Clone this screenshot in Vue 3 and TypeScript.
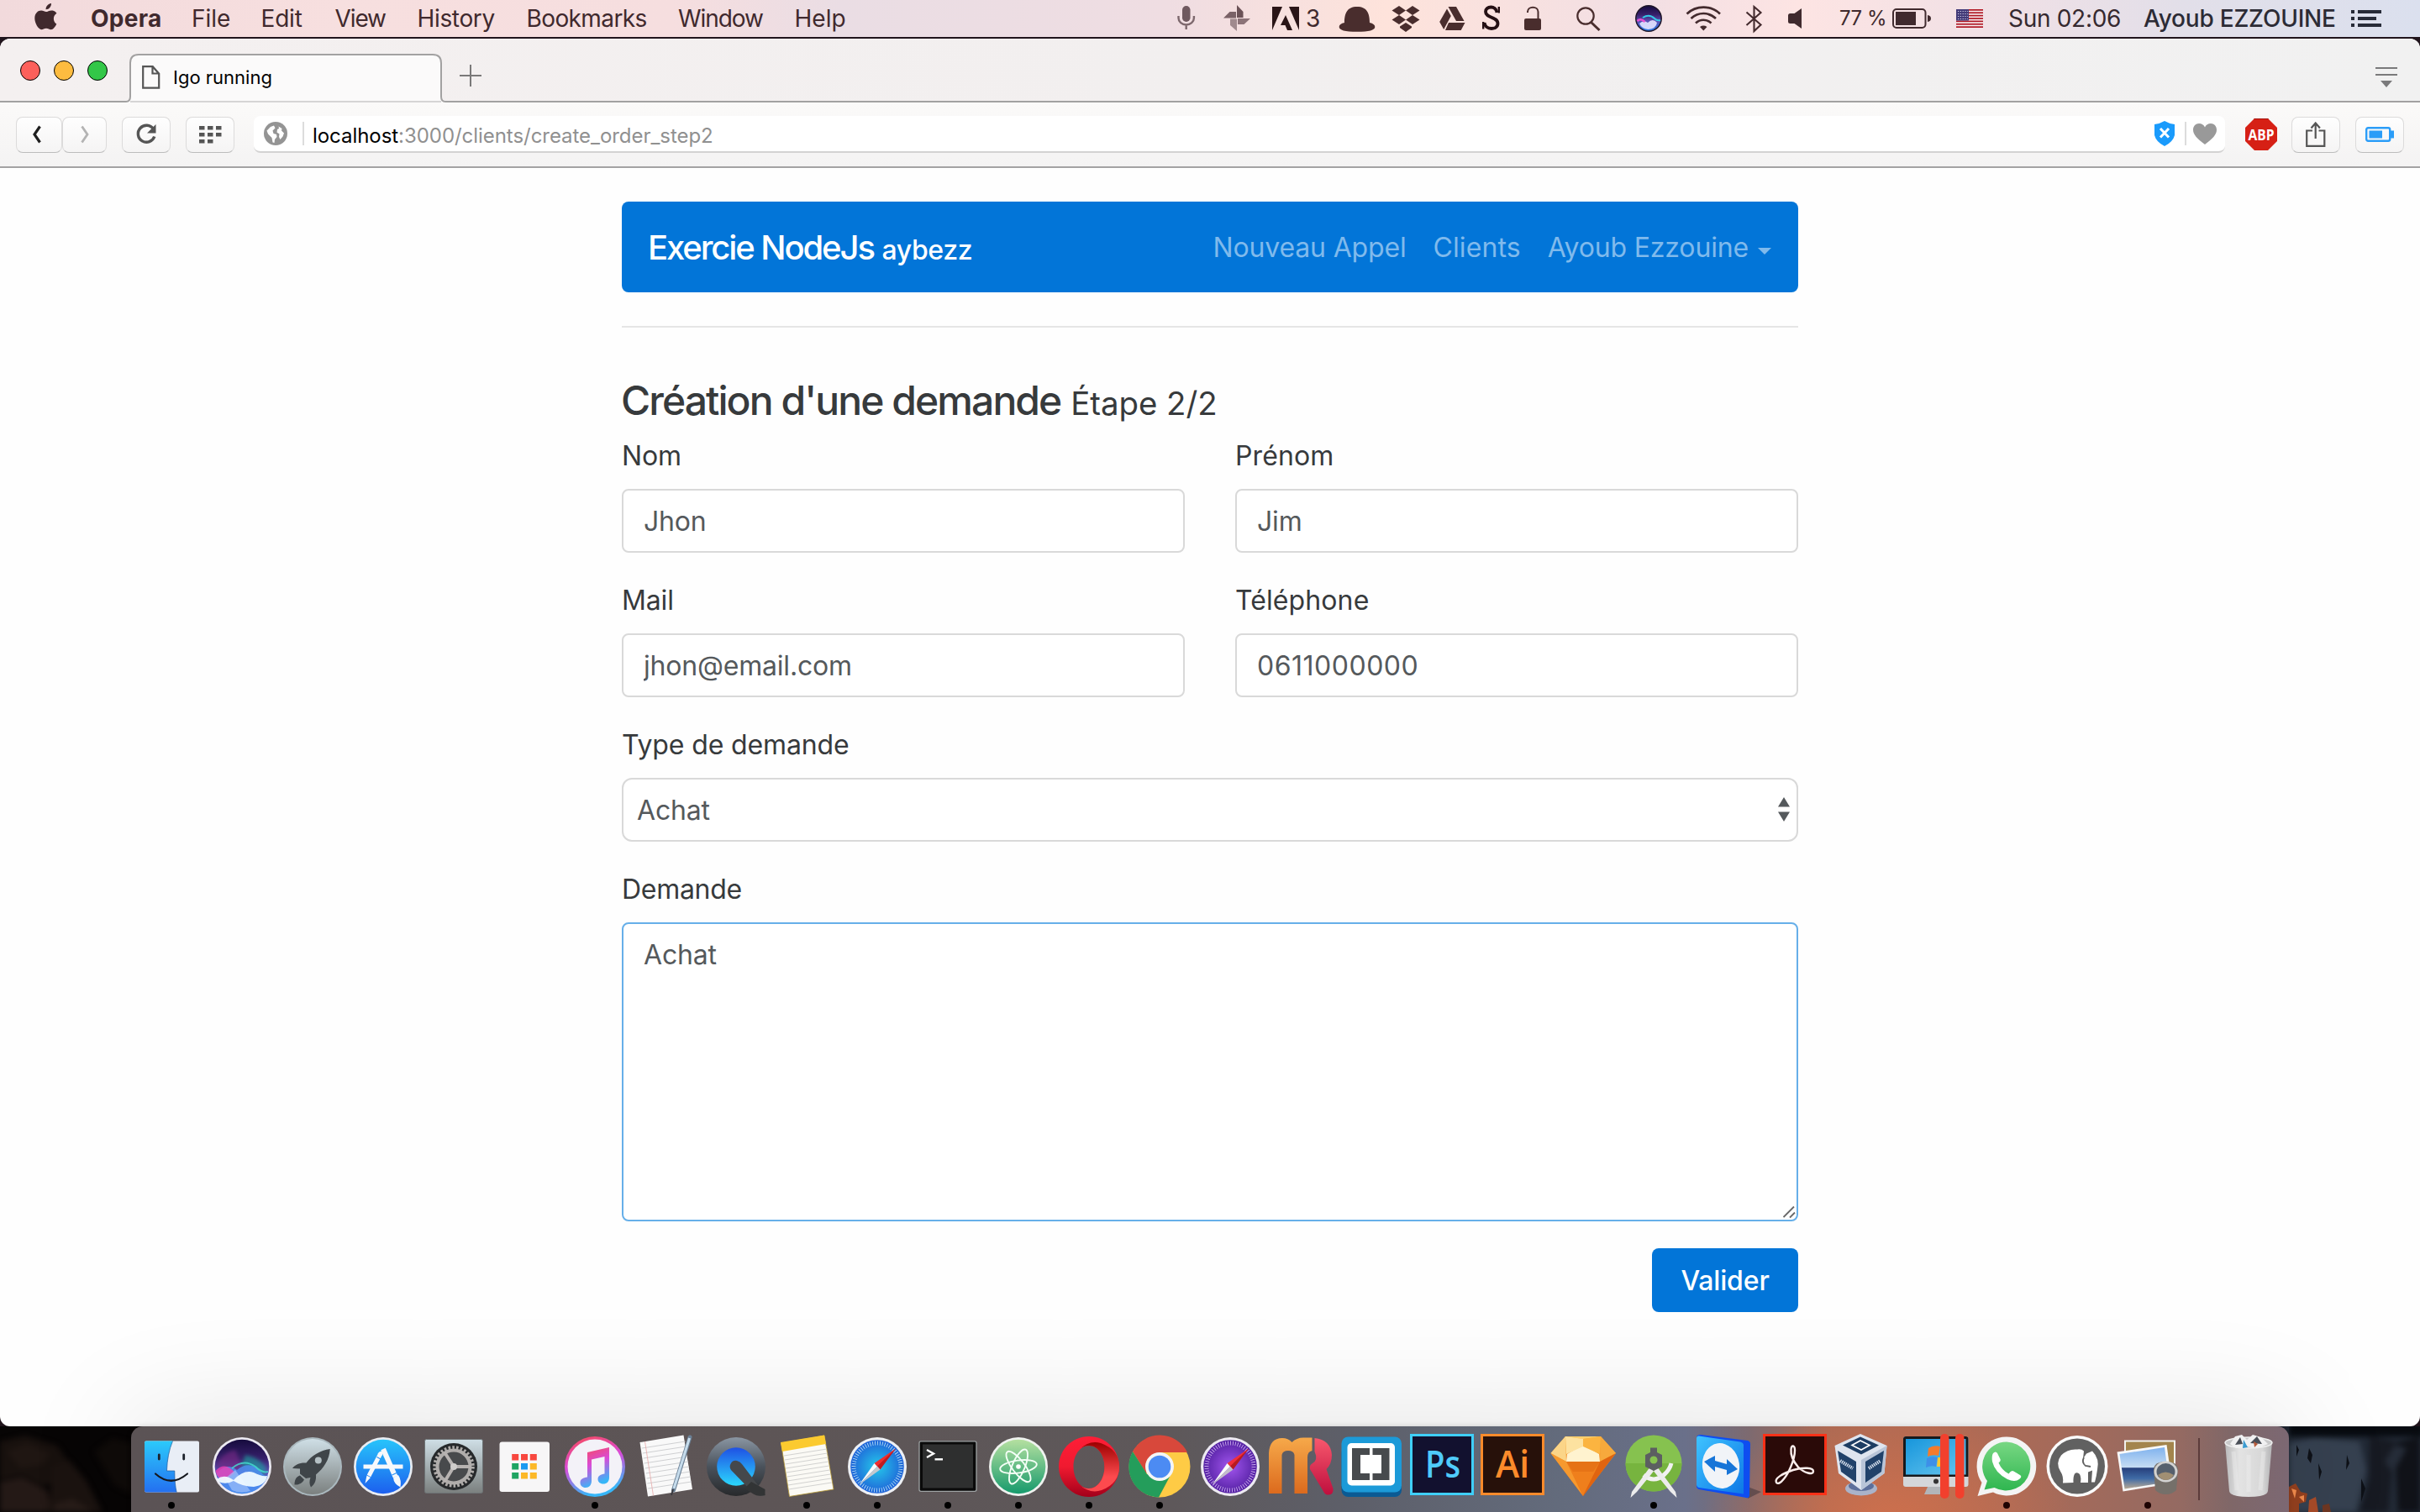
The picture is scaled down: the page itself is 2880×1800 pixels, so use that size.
<script setup lang="ts">
import { ref } from 'vue'

interface MenuItem {
  label: string
  width: number
  spacing: number
}

// Application menus with their title widths and tracking
const menus: MenuItem[] = [
  { label: 'File', width: 82.5, spacing: 0 },
  { label: 'Edit', width: 88, spacing: -0.2 },
  { label: 'View', width: 98, spacing: -1.1 },
  { label: 'History', width: 130, spacing: -0.34 },
  { label: 'Bookmarks', width: 180.5, spacing: -0.6 },
  { label: 'Window', width: 138.5, spacing: -1.05 },
  { label: 'Help', width: 64, spacing: 0 },
]

const form = ref({
  nom: 'Jhon',
  prenom: 'Jim',
  mail: 'jhon@email.com',
  telephone: '0611000000',
  type: 'Achat',
  demande: 'Achat',
})

// 3 × 3 launcher tiles
const tiles = ['#f8473f', '#f8473f', '#f8473f', '#1fa463', '#1a9af0', '#fcb827', '#1fa463', '#fcb827', '#fcb827']
const rulings = [0, 1, 2, 3, 4, 5, 6, 7, 8]
const flagStripes = [0, 1, 2, 3, 4, 5, 6]
</script>

<template>
  <div class="desktop">
    <header class="menubar">
      <svg class="seg" width="108" height="44" viewBox="0 0 108 44">
        <path fill="#40292d" d="M61 4c.4 3.400-2.800 7.400-6.400 7.300C54.200 8 57.500 4.300 61 4zM67.300 28.500c-1.500 3.400-4 6.700-6.600 6.700-2.200 0-3-1.400-5.700-1.400s-3.600 1.400-5.700 1.400C45.800 35.200 41.300 27.600 41.300 21.800c0-6 3.900-9.300 7.700-9.300 2.400 0 4.400 1.600 5.900 1.600 1.400 0 3.700-1.700 6.500-1.700 1.100 0 4.300.4 6.100 3.400-5.200 3.200-4.300 10.600-.2 12.700z" />
      </svg>
      <b class="app-name">Opera</b>
      <span v-for="m in menus" :key="m.label" class="menu" :style="{ width: m.width + 'px', letterSpacing: m.spacing + 'px' }">{{ m.label }}</span>
      <div class="status">
        <svg class="seg" width="56" height="44" viewBox="1390 0 56 44">
          <rect x="1407" y="7" width="9.500" height="19" rx="4.700" fill="#6f595f" />
          <path d="M1402.500 19v2.500a9.200 8 0 0 0 18.400 0V19M1411.700 29.500V35" fill="none" stroke="#7d686d" stroke-width="2.400" />
        </svg>
        <svg class="seg" width="54" height="44" viewBox="1446 0 54 44">
          <path fill="#6b5257" d="M1472 6l7.500 8v7h-7.500z" /><path fill="#8b7378" d="M1473 22h15l-7.500 7h-7.500z" />
          <path fill="#a08a8e" d="M1472 22.500V37l-8-7v-7.500z" /><path fill="#7a6267" d="M1471 21.500h-15l7.500-7.500h7.500z" />
        </svg>
        <svg class="seg" width="52" height="44" viewBox="1500 0 52 44">
          <path fill="#2a1517" d="M1514 8h12l-12 28zM1534 8h12v28zM1530 18l8 18h-6l-2.500-6h-5.500z" />
        </svg>
        <span class="count">3</span>
        <svg class="seg" width="62" height="44" viewBox="1584 0 62 44">
          <path fill="#492d2d" d="M1600 27c0-11 3-19 15-19s15 8 15 19c4 1 6.300 2.500 6.300 5 0 4-7 5.800-21.300 5.800s-21.300-1.800-21.300-5.800c0-2.500 2.300-4 6.300-5z" />
        </svg>
        <svg class="seg" width="56" height="44" viewBox="1646 0 56 44">
          <path fill="#492d2d" d="M1665 7l8 5.500-8 5.500-8.500-5.500zM1681 7l8.500 5.500-8.500 5.500-8-5.500zM1656.500 23.500l8.500-5.500 8 5.500-8 5.500zM1689.500 23.500L1681 18l-8 5.500 8 5.500zM1673 27l-7 4.500v1.500l7 5 7-5v-1.500z" />
        </svg>
        <svg class="seg" width="52" height="44" viewBox="1702 0 52 44">
          <path fill="#492d2d" d="M1723.500 8h9.500l9.500 17h-9.500zM1722 10.500l4.800 8.500-8.600 16-5-9zM1724 27h19.500l-4.800 9H1720z" />
        </svg>
        <svg class="seg" width="46" height="44" viewBox="1754 0 46 44">
          <path d="M1781.500 15c-.5-4-3.500-6.500-7-6.500-4 0-6.500 2.300-6.500 5.500 0 8 14.500 5.500 14.500 14 0 4-3.500 6-7.500 6-4.500 0-8-3-8.500-7" fill="none" stroke="#241014" stroke-width="3.800" />
          <path d="M1783.800 8v7.500M1765.200 26v8.500" stroke="#241014" stroke-width="2.400" />
        </svg>
        <svg class="seg" width="56" height="44" viewBox="1800 0 56 44">
          <rect x="1814" y="22" width="20" height="14" rx="2" fill="#492d2d" />
          <path d="M1818 15v-1c0-7 12.500-7 12.500 0v8" fill="none" stroke="#492d2d" stroke-width="2" />
        </svg>
        <svg class="seg" width="70" height="44" viewBox="1856 0 70 44">
          <circle cx="1887" cy="19" r="9.700" fill="none" stroke="#492d2d" stroke-width="2.200" />
          <path d="M1893.500 26.500l10 9.500" stroke="#492d2d" stroke-width="3" />
        </svg>
        <svg class="seg" width="64" height="44" viewBox="1926 0 64 44">
          <circle cx="1962" cy="22" r="15.200" fill="url(#siri)" stroke="#1d1527" stroke-width="1.500" />
          <path d="M1951 28q5-5 10-1 6-6 11 0-1 7-10.500 8-8-1-10.500-7z" fill="#e6e4ff" opacity=".9" />
          <path d="M1955 21q8-5 14 1 3 3 7 2" fill="none" stroke="#35c9e6" stroke-width="2" />
          <path d="M1948.500 25q4-4 9 1" stroke="#e94fd0" stroke-width="2.500" fill="none" />
        </svg>
        <svg class="seg" width="70" height="44" viewBox="1990 0 70 44">
          <g fill="none" stroke="#432a2d" stroke-width="2.700"><path d="M2007.500 16.500c11-10.500 28.500-10.500 39.500 0M2012.500 22c8.500-8 21-8 29.500 0M2018 27.500c5.500-5 13-5 18.500 0" /></g>
          <path fill="#432a2d" d="M2023 32q4.200-2.800 8.500 0l-4.200 4.500z" />
        </svg>
        <svg class="seg" width="52" height="44" viewBox="2060 0 52 44">
          <path d="M2078.500 14.500l17 15-8 7.500V8l8 7-17 15" fill="none" stroke="#432a2d" stroke-width="2.100" />
        </svg>
        <svg class="seg" width="48" height="44" viewBox="2112 0 48 44">
          <path fill="#402a2e" d="M2130.500 16h5l8.500-6v24l-8.500-6h-5q-2.500 0-2.500-2.500v-7q0-2.500 2.500-2.500z" />
        </svg>
        <span class="charge">77 %</span>
        <svg class="seg" width="64" height="44" viewBox="2246 0 64 44">
          <rect x="2253" y="11" width="38.500" height="22" rx="4" fill="none" stroke="#402a2e" stroke-width="2" />
          <rect x="2256" y="14" width="24" height="16" fill="#402a2e" /><path fill="#402a2e" d="M2294 18q4 .5 4 4t-4 4z" />
        </svg>
        <svg class="seg" width="66" height="44" viewBox="2310 0 66 44">
          <rect x="2328" y="11" width="32" height="22" fill="#f5edf0" />
          <rect v-for="s in flagStripes" :key="s" x="2328" :y="11 + s * 3.380" width="32" height="1.700" fill="#b01622" />
          <rect x="2328" y="11" width="15" height="13.500" fill="#423a78" />
          <path d="M2330 13.500h12M2330 16.500h12M2330 19.500h12M2330 22.500h12" stroke="#cfcce4" stroke-width="1.200" stroke-dasharray="1.200 1.600" />
        </svg>
        <span class="clock">Sun 02:06</span>
        <span class="user">Ayoub EZZOUINE</span>
        <svg class="seg" width="90" height="44" viewBox="2790 0 90 44">
          <path fill="#272b38" d="M2798 12h4v4h-4zM2798 20h4v4h-4zM2798 28h4v4h-4zM2806 12h28v4h-28zM2806 20h22v4h-22zM2806 28h28v4h-28z" />
        </svg>
      </div>
    </header>

    <main class="window">
      <div class="titlebar">
        <div class="lights"><i class="red" /><i class="yellow" /><i class="green" /></div>
        <div class="tab">
          <svg class="tab-shape" width="380" height="58" viewBox="0 0 380 58">
            <path d="M0 57q5 0 5-6V11q0-10 10-10h350q10 0 10 10v40q0 6 5 6v1H0z" fill="#fbfafa" />
            <path d="M5 57h370" stroke="#d6d5d5" stroke-width="2" />
            <path d="M0 57q5 0 5-6V11q0-10 10-10h350q10 0 10 10v40q0 6 5 6" fill="none" stroke="#a2a1a1" stroke-width="2" />
          </svg>
          <svg class="page-icon" width="22" height="28" viewBox="0 0 22 28">
            <path d="M1.200 1.200h11.500l7.500 8.500v17H1.200zM12.500 1v8.500h8" fill="none" stroke="#555" stroke-width="2.200" />
          </svg>
          <span class="tab-title">Igo running</span>
        </div>
        <svg class="plus" width="26" height="26" viewBox="0 0 26 26"><path d="M13 0v26M0 13h26" stroke="#7a7979" stroke-width="2" /></svg>
        <svg class="tab-menu" width="26" height="24" viewBox="0 0 26 24"><path fill="#7a7a7b" d="M0 0h26v2H0zM0 8h26v2H0zM6 16h14l-7 8z" /></svg>
      </div>

      <div class="toolbar">
        <button class="tb back"><svg width="12" height="22" viewBox="0 0 12 22"><path d="M9.500 1.500L3 11l6.500 9.500" fill="none" stroke="#1f1f1f" stroke-width="3.200" /></svg></button>
        <button class="tb fwd"><svg width="12" height="22" viewBox="0 0 12 22"><path d="M2.500 1.500L9 11l-6.500 9.500" fill="none" stroke="#b3b3b3" stroke-width="2.800" /></svg></button>
        <button class="tb reload"><svg width="26" height="26" viewBox="0 0 26 26"><path d="M21.500 6.500A10 10 0 1 0 22.800 15.500" fill="none" stroke="#555" stroke-width="3.400" /><path d="M24.500 1v10.500H14z" fill="#555" /></svg></button>
        <button class="tb grid"><svg width="27" height="21" viewBox="0 0 27 21"><path fill="#555" d="M0 0h6.500v4.500H0zM10 0h6.500v4.500H10zM20 0h6.500v4.500H20zM0 8h6.500v4.500H0zM10 8h6.500v4.500H10zM20 8h6.500v4.500H20zM0 16h6.500v4.500H0zM10 16h6.500v4.500H10z" /></svg></button>
        <div class="address">
          <svg class="globe" width="28" height="28" viewBox="0 0 28 28">
            <circle cx="14" cy="14" r="14" fill="#949494" />
            <path fill="#fff" d="M3.500 10.500L8 6l4-1.500 1.500 3-3 3 1 3.500 3.500 1 .5 3-2.500 3-.5 4-2-.5L9.500 19 7 16.500l-2-2zM17.500 5.500l4 2.500-.5 2.500 3 3-1.500 4-3 3.500-1.500-3 .5-3.500-3-2 .5-3.500 2-1z" />
          </svg>
          <i class="rule" />
          <span class="url"><b>localhost</b>:3000/clients/create_order_step2</span>
          <svg class="shield" width="24" height="30" viewBox="0 0 24 30"><path fill="#1a9bfc" d="M12 0q6 3.500 12 4v13q-2 8-12 13Q2 25 0 17V4q6-.5 12-4z" /><path d="M7 9l10 10.500M17 9L7 19.500" stroke="#fff" stroke-width="3" /></svg>
          <i class="rule end" />
          <svg class="heart" width="28" height="25" viewBox="0 0 28 25"><path fill="#999" d="M14 25C5 18 0 13.500 0 7.500 0 3 3.200 0 7 0c3.200 0 5.700 1.700 7 4.500C15.300 1.700 17.800 0 21 0c3.800 0 7 3 7 7.500C28 13.500 23 18 14 25z" /></svg>
        </div>
        <svg class="abp" width="38" height="38" viewBox="0 0 38 38"><path fill="#d62015" d="M11 0h16l11 11v16L27 38H11L0 27V11z" /><path fill="#a51710" d="M11 0h16l1 1H10z" /><text x="3.500" y="25.500" textLength="31" lengthAdjust="spacingAndGlyphs" font-family="Open Sans, sans-serif" font-weight="700" font-size="17.500" fill="#fff">ABP</text></svg>
        <button class="tb share"><svg width="24" height="30" viewBox="0 0 24 30"><path d="M8 10.500H1.200v18.300h21.100V10.500H15.500M11.700 20V2M6.500 7.500l5.200-6 5.200 6" fill="none" stroke="#555" stroke-width="2.200" /></svg></button>
        <button class="tb saver"><svg width="34" height="18" viewBox="0 0 34 18"><rect x="1.200" y="1.200" width="28" height="15.600" rx="2" fill="none" stroke="#2b9df8" stroke-width="2.400" /><path fill="#2b9df8" d="M4.500 4.500H20v9H4.500zM30 4.500h4v9h-4z" /></svg></button>
      </div>

      <section class="page">
        <nav class="navbar">
          <a class="brand">Exercie NodeJs <small>aybezz</small></a>
          <a class="link appel">Nouveau Appel</a>
          <a class="link clients">Clients</a>
          <a class="link account">Ayoub Ezzouine</a>
          <svg width="16" height="8" viewBox="0 0 16 8"><path d="M0 0h16L8 8z" fill="#80baec" /></svg>
        </nav>
        <hr>
        <h4>Création d'une demande <small>Étape 2/2</small></h4>
        <form>
          <div class="row">
            <div class="group"><label>Nom</label><input v-model="form.nom" type="text"></div>
            <div class="group"><label class="wide">Prénom</label><input v-model="form.prenom" type="text"></div>
          </div>
          <div class="row">
            <div class="group"><label>Mail</label><input v-model="form.mail" type="text"></div>
            <div class="group"><label class="wide">Téléphone</label><input v-model="form.telephone" class="digits" type="text"></div>
          </div>
          <div class="group">
            <label>Type de demande</label>
            <div class="field">
              <select v-model="form.type"><option>Achat</option></select>
              <svg class="arrows" width="14" height="29" viewBox="0 0 14 29"><path fill="#55595c" d="M7 0l7 11.500H0zM0 17.500h14L7 29z" /></svg>
            </div>
          </div>
          <div class="group">
            <label class="tight">Demande</label>
            <div class="field">
              <textarea v-model="form.demande" />
              <svg class="grip" width="16" height="16" viewBox="0 0 16 16"><path d="M1.500 14L14 1.500M9 14.500l6-6" stroke="#686868" stroke-width="1.800" /></svg>
            </div>
          </div>
          <div class="actions"><button type="button" class="submit">Valider</button></div>
        </form>
      </section>
    </main>

    <footer class="shelf">
      <svg class="rocks" width="156" height="102" viewBox="0 0 156 102">
        <rect width="156" height="102" fill="#070505" />
        <g class="soft">
          <path d="M0 18l30-7 38 12 14 20-8 22-24 6-24-13L0 64z" fill="#18110e" /><path d="M8 30l24-10 28 12-10 14-26 4z" fill="#1f1612" />
          <path d="M0 66l26-6 30 16 6 26H0z" fill="#241916" /><path d="M62 48l20-8 20 24 20 38H58z" fill="#1b1310" />
          <path d="M66 92l20-6 26 16H62z" fill="#271c18" /><path d="M112 30l22-16 22 6v60l-20-10z" fill="#0f0b09" />
        </g>
      </svg>
      <div class="dock">
        <svg class="ic" viewBox="0 0 84 102">
          <defs>
            <linearGradient id="siri" x1="0" y1="0" x2="0" y2="1"><stop offset="0" stop-color="#150b3d" /><stop offset=".35" stop-color="#37206b" /><stop offset=".6" stop-color="#5d4fb4" /><stop offset="1" stop-color="#2a7fe8" /></linearGradient>
            <linearGradient id="finder" x1="0" y1="0" x2="0" y2="1"><stop offset="0" stop-color="#2bcafb" /><stop offset="1" stop-color="#2470f0" /></linearGradient>
            <linearGradient id="silver" x1="0" y1="0" x2="0" y2="1"><stop offset="0" stop-color="#cfdfe6" /><stop offset="1" stop-color="#7b807f" /></linearGradient>
            <linearGradient id="store" x1="0" y1="0" x2="0" y2="1"><stop offset="0" stop-color="#27c4fb" /><stop offset="1" stop-color="#1c5fee" /></linearGradient>
            <linearGradient id="tunes" x1="0" y1="0" x2="0.300" y2="1"><stop offset="0" stop-color="#fb4a51" /><stop offset=".5" stop-color="#d94bd8" /><stop offset="1" stop-color="#37b6f8" /></linearGradient>
            <linearGradient id="qt" x1="0" y1="0" x2="0" y2="1"><stop offset="0" stop-color="#8a96a3" /><stop offset=".5" stop-color="#4a525b" /><stop offset="1" stop-color="#27292b" /></linearGradient>
            <linearGradient id="qtb" x1="0" y1="0" x2="0" y2="1"><stop offset="0" stop-color="#1f50e4" /><stop offset="1" stop-color="#2bd8fd" /></linearGradient>
            <radialGradient id="saf"><stop offset="0" stop-color="#25c8ea" /><stop offset="1" stop-color="#1f63d8" /></radialGradient>
            <radialGradient id="stp"><stop offset="0" stop-color="#a255ee" /><stop offset="1" stop-color="#5421a3" /></radialGradient>
            <linearGradient id="atom" x1="0" y1="0" x2="0" y2="1"><stop offset="0" stop-color="#b5e0a0" /><stop offset="1" stop-color="#169a6c" /></linearGradient>
            <linearGradient id="opera" x1="0" y1="0" x2="0" y2="1"><stop offset="0" stop-color="#fe1e37" /><stop offset=".5" stop-color="#f01a30" /><stop offset="1" stop-color="#a2001a" /></linearGradient>
            <linearGradient id="operi" x1="0" y1="0" x2="0" y2="1"><stop offset="0" stop-color="#9c0000" /><stop offset=".7" stop-color="#fd4a4e" /></linearGradient>
            <linearGradient id="mo" x1="0" y1="0" x2="0" y2="1"><stop offset="0" stop-color="#f6a94a" /><stop offset="1" stop-color="#dc6a1d" /></linearGradient>
            <linearGradient id="mp" x1="0" y1="0" x2="0" y2="1"><stop offset="0" stop-color="#f7586d" /><stop offset="1" stop-color="#bf0f3e" /></linearGradient>
            <linearGradient id="wa" x1="0" y1="0" x2="0" y2="1"><stop offset="0" stop-color="#78d783" /><stop offset="1" stop-color="#2fb650" /></linearGradient>
            <linearGradient id="gem" x1="0" y1="0" x2="0" y2="1"><stop offset="0" stop-color="#fbb03b" /><stop offset="1" stop-color="#ea6010" /></linearGradient>
            <linearGradient id="tv" x1="0" y1="0" x2="1" y2="1"><stop offset="0" stop-color="#3fc3ff" /><stop offset="1" stop-color="#0d78e6" /></linearGradient>
            <linearGradient id="win" x1="0" y1="0" x2="1" y2="1"><stop offset="0" stop-color="#1796dc" /><stop offset="1" stop-color="#66c5ee" /></linearGradient>
            <linearGradient id="sea" x1="0" y1="0" x2="0" y2="1"><stop offset="0" stop-color="#7fb2ee" /><stop offset=".48" stop-color="#c5dcf3" /><stop offset=".5" stop-color="#27407c" /><stop offset=".75" stop-color="#3f6ba6" /><stop offset="1" stop-color="#b9a993" /></linearGradient>
            <linearGradient id="bin" x1="0" y1="0" x2="1" y2="0"><stop offset="0" stop-color="#b9b9ba" /><stop offset=".3" stop-color="#e3e3e3" /><stop offset=".8" stop-color="#d7d7d7" /><stop offset="1" stop-color="#b2b2b4" /></linearGradient>
          </defs>
          <rect x="10" y="17.500" width="65" height="61" rx="2" fill="#e9eef6" />
          <path d="M12 17.500h31.500Q37 33 36.500 53h9.300q0 16 2.400 25.500H12q-2 0-2-2v-57q0-2 2-2z" fill="url(#finder)" />
          <path d="M43.500 17.500Q37 33 36.500 53h9.300q0 16 2.400 25.500" fill="none" stroke="#1d5a9c" stroke-width=".7" />
          <path d="M27.300 34v5M56.700 34v5" stroke="#1c222b" stroke-width="2.800" stroke-linecap="round" />
          <path d="M23 56.500q18.500 16.500 38 0" fill="none" stroke="#15181e" stroke-width="2.200" stroke-linecap="round" />
          <circle cx="42" cy="94" r="4" />
        </svg>
        <svg class="ic" viewBox="0 0 84 102">
          <circle cx="42" cy="48" r="35" fill="#eceaf2" /><circle cx="42" cy="48" r="32.300" fill="url(#siri)" />
          <g class="glow"><path d="M12 46q6-14 22-18l8 20-18 10z" fill="#7a2a86" opacity=".6" /><path d="M46 34q18 4 25 16l-4 12-26-14z" fill="#1c9f9c" opacity=".65" /></g>
          <path d="M12 56c8-10 16-10 24-4 10-9 22-7 29 3 3 4 6 5 8 3-4 13-15 21.500-31 21.500S14 70 12 56z" fill="#4f8df0" opacity=".85" />
          <path d="M10.500 53c8-8 15-7 23 2l-12 10q-9-2-11-12z" fill="#ef3fb5" opacity=".8" />
          <path d="M30 50q14-12 28-2 8 8 15 6" fill="none" stroke="#45e0cf" stroke-width="2" opacity=".8" /><path d="M34 52l18 25q-12 4-22-1l-8-14z" fill="#9ec1fb" opacity=".7" />
          <path d="M12 63q9-7 20 1 12-13 24-9 9 5 16 4-2 11-16 13-13 0-24-7-9 5-18 1z" fill="#f2fcff" opacity=".93" />
        </svg>
        <svg class="ic" viewBox="0 0 84 102">
          <circle cx="42" cy="48" r="35" fill="#aab8be" /><circle cx="42" cy="48" r="33" fill="url(#silver)" />
          <path fill="#3f4549" d="M62.800 27C51 28.500 40.500 35 34.500 43.500c-8-.5-13 2-16.500 6.500l9 .5 0 6 7 5.500 5.500-1c-1.500 4-1.500 8 .5 11.500 5-3.500 6.500-9 6-15C55 50 62 40 62.800 27zM27 58.500c-5 1.500-6.500 6-6.500 11 5 .5 9.500-2 11.500-6z" />
          <circle cx="48.800" cy="40.500" r="4" fill="#b4c0c4" />
        </svg>
        <svg class="ic" viewBox="0 0 84 102">
          <circle cx="42" cy="48" r="35" fill="#e8ecf2" /><circle cx="42" cy="48" r="32.300" fill="url(#store)" />
          <g stroke="#f6f8fb" stroke-width="5" stroke-linecap="butt" fill="none"><path d="M18.500 48h47" stroke-width="5.200" /><path d="M38.500 33L25 59" /><path d="M42 27l14.500 33" stroke-width="6" /></g>
          <path fill="#f6f8fb" d="M36 32q3-4 6-1l-1.500 4-5-2.500zM22.500 58.500l4.500 2.500-6.500 7zM54 61l6-3q4 6 2.500 14.500-8-4-8.500-11.500z" />
          <path d="M34.500 36.500l4.500 2.500M52.500 58l6.500-3" stroke="#2a8ff5" stroke-width="1.200" />
        </svg>
        <svg class="ic" viewBox="0 0 84 102">
          <rect x="7.500" y="15.500" width="69" height="64" rx="2" fill="url(#silver)" stroke="#6d7375" />
          <circle cx="42" cy="48" r="28" fill="#26292b" /><circle cx="42" cy="48" r="22.500" fill="none" stroke="#aeaba9" stroke-width="4.500" stroke-dasharray="2.600 2.110" />
          <circle cx="42" cy="48" r="19.500" fill="#484a4c" stroke="#b0adab" stroke-width="4" />
          <path d="M42 48h20M42 48L31 31M42 48L31 66" stroke="#b7b3b1" stroke-width="4" /><circle cx="42" cy="48" r="4" fill="#cfcdcb" />
        </svg>
        <svg class="ic" viewBox="0 0 84 102">
          <rect x="12.500" y="18.500" width="59.500" height="59.500" rx="3" fill="#f7f6f7" />
          <rect v-for="(c, i) in tiles" :key="i" :x="27.200 + (i % 3) * 10.800" :y="33 + Math.floor(i / 3) * 11" width="8" height="7.500" :fill="c" />
        </svg>
        <svg class="ic" viewBox="0 0 84 102">
          <circle cx="42" cy="48" r="36" fill="url(#tunes)" /><circle cx="42" cy="48" r="32.500" fill="#f3f2f8" />
          <path fill="url(#tunes)" d="M33 31l26-6v36c0 5-3 7.500-7 7.500s-6.500-2.500-6.500-5.500c0-4 3.500-6 8-6.500V36l-15.500 3.500V65c0 5-3 8-7 8s-6.500-2.500-6.500-6c0-4 3.500-6 8.500-6.500z" />
          <circle cx="42" cy="94" r="4" />
        </svg>
        <svg class="ic" viewBox="0 0 84 102">
          <path d="M11.500 19l52-8.500L74 75l-53 8.500z" fill="#f9f9f9" />
          <path v-for="n in rulings" :key="n" :d="`M${14 + n * .9} ${26 + n * 6}l51.500-8`" stroke="#cfd0d2" stroke-width="1" />
          <path d="M17.500 18l10 64.500" stroke="#e8a8a8" stroke-width=".8" />
          <path d="M71 13L51.500 76" stroke="#6a7f94" stroke-width="5" stroke-linecap="round" /><path d="M70.500 14L52 74" stroke="#c6dcec" stroke-width="3" /><path d="M51 75l-2 7" stroke="#3b3b40" stroke-width="2" />
        </svg>
        <svg class="ic" viewBox="0 0 84 102">
          <circle cx="42" cy="48" r="35" fill="url(#qt)" /><circle cx="42" cy="48" r="22.800" fill="url(#qtb)" />
          <path d="M35 46q2-6 8-5 4 1 6 4l28 37q-8 2-14-2L36 52q-2-3-1-6z" fill="#45484b" /><path d="M60 66l16.500 9V82q-9 2-14-1.500L52 74z" fill="#323435" />
        </svg>
        <svg class="ic" viewBox="0 0 84 102">
          <path d="M11.500 20l51.500-9L74 75l-52.500 8.500z" fill="#fbfaf5" stroke="#b89a35" stroke-width=".8" />
          <path d="M11 19l52-8.500 2 10.500-52 9z" fill="#fbca2f" />
          <path v-for="n in rulings" :key="n" :d="`M${15 + n * .7} ${35 + n * 5}l51-8`" stroke="#d2d2d0" stroke-width="1" />
          <circle cx="42" cy="94" r="4" />
        </svg>
        <svg class="ic" viewBox="0 0 84 102">
          <circle cx="42" cy="48" r="35" fill="#edf0f4" /><circle cx="42" cy="48" r="31.800" fill="url(#saf)" />
          <circle cx="42" cy="48" r="28" fill="none" stroke="#bfe4f8" stroke-width="5" stroke-dasharray=".8 2.130" />
          <path d="M64 26.500L38.500 44l6 7z" fill="#f02e2e" /><path d="M64 26.500L45.500 51.500l-3.500-4z" fill="#c01b20" />
          <path d="M20.500 69.500L38.500 44l3.500 4z" fill="#fafafa" /><path d="M20.500 69.500L45.500 51.500l-3.500-4z" fill="#c3c8ce" />
          <circle cx="42" cy="94" r="4" />
        </svg>
        <svg class="ic" viewBox="0 0 84 102">
          <rect x="8" y="17.800" width="68" height="59.500" rx="2" fill="#0a0a0a" stroke="#9ea3a4" stroke-width="1.300" /><rect x="12" y="21.500" width="60" height="52" fill="#2e2f2f" />
          <path d="M17 28l8 4.500-8 4.500" fill="none" stroke="#fff" stroke-width="2.400" /><path d="M26.500 39.300H36" stroke="#fff" stroke-width="2.400" />
          <circle cx="42" cy="94" r="4" />
        </svg>
        <svg class="ic" viewBox="0 0 84 102">
          <circle cx="42" cy="48" r="35" fill="#eff2ef" /><circle cx="42" cy="48" r="32.300" fill="url(#atom)" />
          <g fill="none" stroke="#f4fff6" stroke-width="1.900"><ellipse cx="42" cy="48" rx="22" ry="7.500" transform="rotate(-8 42 48)" /><ellipse cx="42" cy="48" rx="22" ry="7.500" transform="rotate(53 42 48)" /><ellipse cx="42" cy="48" rx="22" ry="7.500" transform="rotate(113 42 48)" /></g>
          <circle cx="42" cy="48" r="2.800" fill="#fff" /><circle cx="42" cy="94" r="4" />
        </svg>
        <svg class="ic" viewBox="0 0 84 102">
          <path fill-rule="evenodd" fill="url(#opera)" d="M42 12c20 0 36 16 36 36S62 84 42 84 6 68 6 48s16-36 36-36zm0 11c-10.500 0-18.500 11-18.500 25S31.500 74 42 74s18.500-12 18.500-26S52.500 23 42 23z" />
          <path fill="url(#operi)" d="M30 28q12-12 26-8 22 8 22 28T57 76q-14 5-27-7 5 5 12 5c10.500 0 18.500-12 18.500-26S52.500 23 42 23q-7 0-12 5z" />
          <circle cx="42" cy="94" r="4" />
        </svg>
        <svg class="ic" viewBox="0 0 84 102">
          <circle cx="42" cy="48" r="36.500" fill="#fecb45" />
          <path d="M10 30A36.500 36.500 0 0 1 75 31H42L26 56z" fill="#d8483b" /><path d="M10 30A36.500 36.500 0 0 0 41 84.500L54 60 27 57z" fill="#249d5b" />
          <circle cx="42" cy="48" r="17" fill="#f5f5f5" /><circle cx="42" cy="48" r="13.300" fill="#4c8bf3" /><circle cx="42" cy="94" r="4" />
        </svg>
        <svg class="ic" viewBox="0 0 84 102">
          <circle cx="42" cy="48" r="35" fill="#edeaf2" /><circle cx="42" cy="48" r="31.800" fill="url(#stp)" />
          <circle cx="42" cy="48" r="28" fill="none" stroke="#d5b9f3" stroke-width="5" stroke-dasharray=".8 2.130" />
          <path d="M64 26.500L38.500 44l6 7z" fill="#f02e3e" /><path d="M64 26.500L45.500 51.500l-3.500-4z" fill="#b81b20" />
          <path d="M20.500 69.500L38.500 44l3.500 4z" fill="#fafafa" /><path d="M20.500 69.500L45.500 51.500l-3.500-4z" fill="#c3bccb" />
        </svg>
        <svg class="ic" viewBox="0 0 84 102">
          <path fill="url(#mo)" d="M4 80V32q1-18 16-18 7 0 11.500 5Q37 13.500 45 13.500h10.500V29Q50 30 50 37v43H34.500V34q-1-5-7.500-5t-7.500 5v46z" />
          <path fill="url(#mp)" d="M58.500 14q19 2 20.500 20 0 11-6.500 17l8 23q1 8-7 7.500-3-.5-4.500-4L53 51q-1-5 3-7 7-4 2.500-14z" />
        </svg>
        <svg class="ic" viewBox="0 0 84 102">
          <rect x="6.500" y="24" width="71.500" height="60" rx="8" fill="#0b5a93" /><rect x="6.500" y="12.500" width="71.500" height="66" rx="8" fill="#1c9ad8" />
          <rect x="13.500" y="20" width="56.500" height="50.500" rx="5" fill="#fff" />
          <path fill="#474a4d" d="M19 26h21v8H29v22h11v8H19zM43.500 26h20v38h-20v-8H54V34H43.500z" />
        </svg>
        <svg class="ic" viewBox="0 0 84 102">
          <rect x="5.500" y="10.500" width="73" height="70" fill="#12112f" stroke="#3fcffa" stroke-width="3" />
          <text x="22" y="60.500" textLength="42" lengthAdjust="spacingAndGlyphs" font-family="Open Sans, sans-serif" font-weight="600" font-size="46" fill="#4fcbfb">Ps</text>
        </svg>
        <svg class="ic" viewBox="0 0 84 102">
          <rect x="5.500" y="10.500" width="73" height="70" fill="#27110a" stroke="#fb8b2b" stroke-width="3" />
          <text x="22" y="60.500" textLength="40" lengthAdjust="spacingAndGlyphs" font-family="Open Sans, sans-serif" font-weight="600" font-size="46" fill="#fb8b2b">Ai</text>
        </svg>
        <svg class="ic" viewBox="0 0 84 102">
          <path fill="url(#gem)" d="M21 12h42l18 20-39 51L3.500 32z" /><path fill="#fdcf6d" d="M21 12h42l-21 3z" /><path fill="#fff3cf" d="M42 22l19 11 1 9H22l1-9z" />
          <path fill="#fde2a0" d="M42 15L21 12l1 21zM42 15l-20 18 20-9z" /><path fill="#fbb440" d="M42 15l21-3-1 21zM42 15l20 18-20-9z" />
          <path fill="#fbd588" d="M21 12L3.500 32 22 42z" /><path fill="#f7a93c" d="M63 12l18 20-19 10z" />
          <path fill="#ef7f1c" d="M22 42h40L42 83z" /><path fill="#f6992e" d="M3.500 32L22 42l20 41z" /><path fill="#e0640f" d="M81 32L62 42 42 83z" /><path d="M22 42l8 12h24l8-12" fill="#e06a12" opacity=".6" />
        </svg>
        <svg class="ic" viewBox="0 0 84 102">
          <circle cx="42" cy="44" r="33.500" fill="#86c24f" /><path d="M8.500 44a33.500 33.500 0 0 0 67 0z" fill="#77b43f" />
          <path d="M30 58q12 10 24 0 7-6 9-14" fill="none" stroke="#f2f2f2" stroke-width="5" />
          <path d="M38 48L16 78l-1.500 7L22 78l22-27zM46 48l22 30 1.500 7L62 78 40 51z" fill="#ececec" />
          <path fill="#5c5f61" fill-rule="evenodd" d="M38 25.500h8V31l6 3v14l-10 5-10-5V34l6-3zM42 35.500a4.500 4.500 0 1 0 .01 0z" />
          <circle cx="42" cy="94" r="4" />
        </svg>
        <svg class="ic" viewBox="0 0 84 102">
          <path d="M70 72l16 6-16 8z" fill="#20202a" opacity=".4" />
          <path d="M14 10l56 7q3 1 3 4l-1 62q-1 3-4 2L12 75q-3-1-3-4V14q0-4 5-4z" fill="#0e4df0" /><path d="M12 11.500l49 7q4 1 4 4v58L12 73q-3-1-3-4V14q0-3 3-2.500z" fill="url(#tv)" />
          <ellipse cx="38" cy="47" rx="22" ry="27" fill="#f1f4f8" transform="rotate(-8 38 47)" />
          <path d="M18 42l13-7v6l14 4v-6l13 12-13 7v-6l-14-4v6z" fill="#1775d8" />
        </svg>
        <svg class="ic" viewBox="0 0 84 102">
          <rect x="5.500" y="10.500" width="73" height="70" fill="#2a0a08" stroke="#fb3117" stroke-width="3" />
          <path d="M20 67c-3-5 8-11 20-15 12-3.500 24-3 24 1.500 0 5-11 2-18-5-7-8-9-16-8.500-21 .5-6 4.500-5 4.500 1 0 12-8 28-13 34-4 5-7 6.500-9 4.500z" fill="none" stroke="#fbeeec" stroke-width="2.400" />
        </svg>
        <svg class="ic" viewBox="0 0 84 102">
          <ellipse cx="37" cy="74" rx="19" ry="8.500" fill="#aab3c9" /><ellipse cx="37" cy="71" rx="15" ry="6" fill="#5c6f9b" />
          <path d="M36 9l31.500 14-3 33L37 76 10 56 5.500 23z" fill="#dfe5ef" /><path d="M37 40v36l27.500-20 3-33z" fill="#b9c5d8" />
          <path d="M36 12.500l22 10-21 11-22-11z" fill="#1d3d63" /><path d="M36 17l11 5.500L37 28l-11-5.500z" fill="none" stroke="#fff" stroke-width="1.600" />
          <path d="M9 29l22 13v25L13 54zM64 29L42 42v25l19-13z" fill="#21426a" />
          <path d="M12 41l15 9M46 50l14-9" stroke="#dbe4f0" stroke-width="4" stroke-dasharray="1.400 1" />
        </svg>
        <svg class="ic" viewBox="0 0 84 102">
          <path d="M33 70h20l3 11H28z" fill="#b2b5b9" /><rect x="3" y="12" width="77.500" height="60" rx="3" fill="#d4d6d9" />
          <path d="M3 60V15q0-3 3-3h71.500q3 0 3 3v45z" fill="#17191c" /><rect x="6" y="15" width="71.500" height="42.500" fill="url(#win)" />
          <path d="M33 26q6-4 14-2l-2 11q-7-2-13 1z" fill="#f37b2c" /><path d="M31 38q6-3 13-1l-2 11q-6-2-12 1z" fill="#3d8fe8" /><path d="M44 37h4v11h-5z" fill="#fbc72f" />
          <circle cx="42" cy="65.500" r="3" fill="#333" />
          <rect x="47" y="9" width="10.500" height="77" rx="5" fill="#f2402d" /><rect x="65" y="9" width="10.500" height="77" rx="5" fill="#f2402d" />
        </svg>
        <svg class="ic" viewBox="0 0 84 102">
          <path d="M42 12.500a35 35 0 1 1-16 66L7.500 83l5-16A35 35 0 0 1 42 12.500z" fill="#f4f4f4" /><path d="M42 18.500a29 29 0 1 1-14.500 54.500L15.500 75.500l3.500-10.500A29 29 0 0 1 42 18.500z" fill="url(#wa)" />
          <path d="M26 32q3-3 5 0l3.500 7q1 2-2 4.500 4 9 12 13 3-5 6-3l7.500 4.500q3 2-1 5-5 4-14 0Q28 55 25 42q-1-7 1-10z" fill="#fff" />
          <circle cx="42" cy="94" r="4" fill="#1e0302" />
        </svg>
        <svg class="ic" viewBox="0 0 84 102">
          <circle cx="42" cy="47.500" r="36.500" fill="#fbfbfb" /><circle cx="42" cy="47.500" r="33" fill="#616161" />
          <path fill="#fff" d="M25 67.500q1-8-3-14-6-10 1-19 8-8 19-7 5-1 8 2l-1 9 4-6 7-3q9 9 6 22-1 8-3 15h-4l1-14-5 2v12.500h-9q1-6-1-10-3-3-6-.5-2 4-1.500 10.500z" />
          <path d="M50 37q-3 6 2 10l6 1" fill="none" stroke="#616161" stroke-width="1.800" />
        </svg>
        <svg class="ic" viewBox="0 0 84 102">
          <rect x="15" y="17.500" width="59" height="50" fill="#a3854d" stroke="#f2f2ee" stroke-width="2" />
          <path d="M5.500 30.500l59-8.500 6.500 46-58.500 9.500z" fill="#f8f8f8" /><path d="M8.500 33l53.500-8 5.500 41-53 8.500z" fill="url(#sea)" />
          <path d="M49 52q0-10 14.500-10T78 52l-2 24q-5 5-12.500 5T51 76z" fill="#75706a" /><ellipse cx="63.500" cy="54" rx="14" ry="12.500" fill="#d3d3d2" /><ellipse cx="63.500" cy="54" rx="11" ry="10" fill="#56606d" /><path d="M54 58q9-7 19 0-4 6-9.500 6T54 58z" fill="#a18f73" />
          <circle cx="42" cy="94" r="4" fill="#1e0302" />
        </svg>
        <i class="divider" />
        <svg class="ic" viewBox="0 0 84 102">
          <path d="M14 19h56l-5 58q-1 7-23 7t-23-7z" fill="url(#bin)" /><ellipse cx="42" cy="19.500" rx="28" ry="6.500" fill="#c9c9ca" stroke="#efefef" stroke-width="1.500" />
          <path d="M20 21l6-9 8-2 6 6 7-6 10 3 8 8-12 5-14-2-12 2z" fill="#f1f1f2" /><path d="M26 22l6-9 3 8zM44 20l8-8 6 9z" fill="#4a4f58" /><path d="M36 16l5 9-6 1z" fill="#3b9bd0" /><path d="M48 18l5 3-4 4z" fill="#b65a3a" />
          <path d="M24 30l4 46M42 34v44M60 30l-4 46" stroke="#f3f3f3" stroke-width="5" opacity=".35" />
        </svg>
      </div>
      <svg class="rocks" width="156" height="102" viewBox="2724 0 156 102">
        <rect x="2724" width="156" height="102" fill="#222a36" />
        <g class="soft">
          <path d="M2724 20l30-6 54 4 8 34-12 50h-80z" fill="#364150" /><path d="M2820 12l30 6-8 84h-34l12-40z" fill="#171a22" /><path d="M2850 20l30-8v90h-26z" fill="#101218" /><path d="M2838 42l12-20 14 4-16 30z" fill="#252c38" />
          <path d="M2724-4h160v16h-160z" fill="#080b10" />
        </g>
        <path d="M2733 22l3 6-3 8zM2748 26l4 8-2 10-4-6zM2793 34l3 10-4 8zM2759 44l4 10-3 10zM2810 62l5 12-5 16z" fill="#0e1117" />
        <path d="M2724 72l8-4 6 10 8 2-2 10-8 2v10h-12z" fill="#93401f" /><path d="M2727 74l6 2-2 10zM2736 84l6-2v8z" fill="#f08a4c" /><path d="M2748 88l8-4 3 18h-12z" fill="#a84b28" /><path d="M2764 94l8-2 2 10h-10z" fill="#6e3622" />
      </svg>
    </footer>
  </div>
</template>

<style>
body {
  background: #14090d;
  overflow: hidden;
}
</style>

<style scoped>
.desktop {
  width: 2880px;
  height: 1800px;
  display: flex;
  flex-direction: column;
  overflow: hidden;
  background: #20141c;
  font-family: Inter, 'Liberation Sans', sans-serif;
}
button, input, select, textarea {
  font-family: inherit;
  box-sizing: border-box;
  margin: 0;
}
svg {
  display: block;
  flex: none;
}

/* menu bar */
.menubar {
  height: 44px;
  flex: none;
  display: flex;
  align-items: center;
  margin-bottom: 2px;
  font-size: 28px;
  line-height: 44px;
  color: #40292d;
  white-space: nowrap;
  background: linear-gradient(90deg, #f2dadc 0, #f7dfdf 400px, #f6dedf 800px, #eadde4 1000px, #efdde2 1390px, #fee3db 1650px, #f2dfe4 1950px, #fde4e3 2140px, #efe0e6 2400px, #e2dfe9 2600px, #dbe0ee 2880px);
}
.app-name {
  width: 120px;
  letter-spacing: 0.27px;
}
.status {
  display: flex;
  margin-left: auto;
  width: 1490px;
}
.count {
  width: 30px;
  padding-left: 2px;
  font-size: 28px;
}
.charge {
  width: 57px;
  padding-left: 29px;
  font-size: 24px;
  letter-spacing: -0.46px;
}
.clock {
  width: 161px;
  padding-left: 14px;
  color: #35292f;
  letter-spacing: -0.3px;
}
.user {
  width: 239px;
  font-weight: 500;
  color: #2c2b35;
  letter-spacing: -0.22px;
}

/* browser window */
.window {
  height: 1652px;
  flex: none;
  display: flex;
  flex-direction: column;
  border-radius: 12px;
  overflow: hidden;
  background: #fefefe;
}
.titlebar {
  height: 74px;
  flex: none;
  display: flex;
  border-bottom: 2px solid #a2a1a1;
  background: linear-gradient(90deg, #f4f0f0, #f2efef 50%, #f1f1f1);
}
.lights {
  display: flex;
  gap: 16px;
  padding: 26px 0 0 24px;
}
.lights i {
  width: 22px;
  height: 22px;
  border-radius: 50%;
  border: 1px solid;
}
.red { background: #fc605b; border-color: #e14843; }
.yellow { background: #fdbc40; border-color: #dfa033; }
.green { background: #33c748; border-color: #27a935; }
.tab {
  position: relative;
  width: 380px;
  height: 58px;
  margin: 18px 0 -2px 22px;
  display: flex;
}
.tab-shape {
  position: absolute;
  left: 0;
  top: 0;
}
.page-icon {
  position: relative;
  margin: 14px 0 0 18.5px;
}
.tab-title {
  position: relative;
  margin: 8px 0 0 15.5px;
  font-size: 22px;
  line-height: 40px;
  color: #000;
}
.plus {
  margin: 31px 0 0 17px;
}
.tab-menu {
  margin: 34px 27px 0 auto;
}
.toolbar {
  height: 76px;
  flex: none;
  display: flex;
  align-items: center;
  padding: 0 19px 0 19px;
  border-bottom: 2px solid #a3a2a3;
  background: linear-gradient(#fbfaf9, #f4f3f3);
}
.tb {
  height: 43px;
  padding: 0;
  display: flex;
  align-items: center;
  justify-content: center;
  border: 1.5px solid #dcdbdb;
  border-bottom-color: #bcbcbc;
  border-radius: 8px;
  background: linear-gradient(#fefefe, #f5f4f4);
}
.back { width: 55px; padding-right: 5px; }
.fwd { width: 53px; }
.reload { width: 58px; margin-left: 18px; }
.grid { width: 58px; margin-left: 18px; }
.share { width: 58px; margin-left: 17px; }
.saver { width: 58px; margin-left: 18px; }
.address {
  flex: 1;
  height: 44px;
  margin-left: 23px;
  box-sizing: border-box;
  border-bottom: 2px solid #d3d2d2;
  border-radius: 8px;
  display: flex;
  align-items: center;
  padding: 0 10px 0 12px;
  background: #fff;
}
.rule {
  width: 2px;
  height: 28px;
  margin-left: 18px;
  background: #dcdcdc;
}
.rule.end { margin-left: 12px; }
.url {
  flex: 1;
  margin-left: 10px;
  padding-top: 5px;
  font-size: 24px;
  line-height: 40px;
  letter-spacing: -0.05px;
  color: #909090;
}
.url b {
  font-weight: 400;
  color: #000;
}
.heart { margin-left: 8px; }
.abp {
  margin-left: 24px;
  overflow: visible;
}

/* page */
.page {
  width: 1400px;
  margin: 0 auto;
  padding-top: 40px;
  font-size: 32px;
  line-height: 48px;
  color: #373a3c;
}
.navbar {
  height: 108px;
  box-sizing: border-box;
  display: flex;
  align-items: center;
  padding: 1px 32px 0 31px;
  border-radius: 8px;
  background: #0275d8;
  white-space: nowrap;
}
.brand {
  flex: 1;
  font-size: 40px;
  font-weight: 500;
  letter-spacing: -2.1px;
  color: #fff;
}
.brand small {
  font-size: 32px;
  line-height: 1;
  letter-spacing: -0.35px;
  margin-left: 1px;
}
.link {
  padding-top: 1px;
  color: #80baec;
  letter-spacing: -0.16px;
}
.appel { margin-right: 32px; }
.clients { margin-right: 32px; letter-spacing: 0.1px; }
.account { margin-right: 11px; }
.navbar svg { margin-top: 8px; }
hr {
  margin: 40px 0 0;
  border: 0;
  height: 2px;
  background: #e5e5e5;
}
h4 {
  margin: 61px 0 16px -1px;
  font-size: 48px;
  font-weight: 500;
  line-height: 52px;
  letter-spacing: -1.93px;
}
h4 small {
  font-size: 38.4px;
  line-height: 1;
  font-weight: 400;
  letter-spacing: -0.04px;
  margin-left: 1px;
}
.row {
  display: flex;
  gap: 60px;
}
.group {
  flex: 1;
  margin-bottom: 33px;
}
label {
  display: block;
  margin-bottom: 15px;
  letter-spacing: -0.14px;
}
label.wide { letter-spacing: 0.1px; }
label.tight { letter-spacing: -0.3px; }
input, select, textarea {
  display: block;
  width: 100%;
  height: 76px;
  padding: 0 24px;
  border: 2px solid #d9d9d9;
  border-radius: 8px;
  outline: none;
  background: #fff;
  color: #55595c;
  font-size: 32px;
  line-height: 48px;
  letter-spacing: -0.19px;
}
input.digits { letter-spacing: 0.5px; }
.field { position: relative; }
select {
  appearance: none;
  padding: 2px 16px 0;
  border-radius: 12px;
  letter-spacing: -0.2px;
}
.arrows {
  position: absolute;
  right: 10px;
  top: 23px;
}
textarea {
  height: 356px;
  padding: 13px 24px;
  border-color: #66afe9;
  resize: none;
  overflow: hidden;
  letter-spacing: -0.2px;
}
.grip {
  position: absolute;
  right: 3px;
  bottom: 3px;
}
.actions {
  display: flex;
  justify-content: flex-end;
  margin-top: -1px;
}
.submit {
  width: 174px;
  height: 76px;
  padding: 0;
  border: 0;
  border-radius: 8px;
  background: #0275d8;
  color: #fff;
  font-size: 32px;
  font-weight: 500;
  letter-spacing: -0.14px;
}

/* dock */
.shelf {
  height: 102px;
  flex: none;
  display: flex;
  background: linear-gradient(90deg, #090606 50%, #1d232f 50%);
}
.soft {
  filter: blur(3px);
}
.glow {
  filter: blur(2px);
}
.dock {
  position: relative;
  z-index: 1;
  width: 2568px;
  box-sizing: border-box;
  padding: 0 6px;
  display: flex;
  border-radius: 14px 14px 0 0;
  box-shadow: 0 0 140px rgba(0, 0, 0, 0.13), 0 0 6px rgba(0, 0, 0, 0.15);
  background:
    radial-gradient(220px 130px at 2090px 110px, rgba(208, 112, 76, 0.9), rgba(208, 112, 76, 0)),
    linear-gradient(90deg, #5b5355 0, #5d5556 750px, #5e585a 1240px, #5d5f69 1450px, #636b7c 1700px, #6a708a 1850px, #7d6a70 1925px, #ab6a54 2020px, #b26a53 2140px, #a46a5a 2300px, #946a62 2440px, #7f6768 2500px, #7c6873 2568px);
}
.ic {
  width: 84px;
  height: 102px;
  overflow: visible;
}
.divider {
  width: 2px;
  height: 74px;
  margin: 14px 16px 0 18px;
  background: rgba(60, 30, 32, 0.6);
}
</style>
